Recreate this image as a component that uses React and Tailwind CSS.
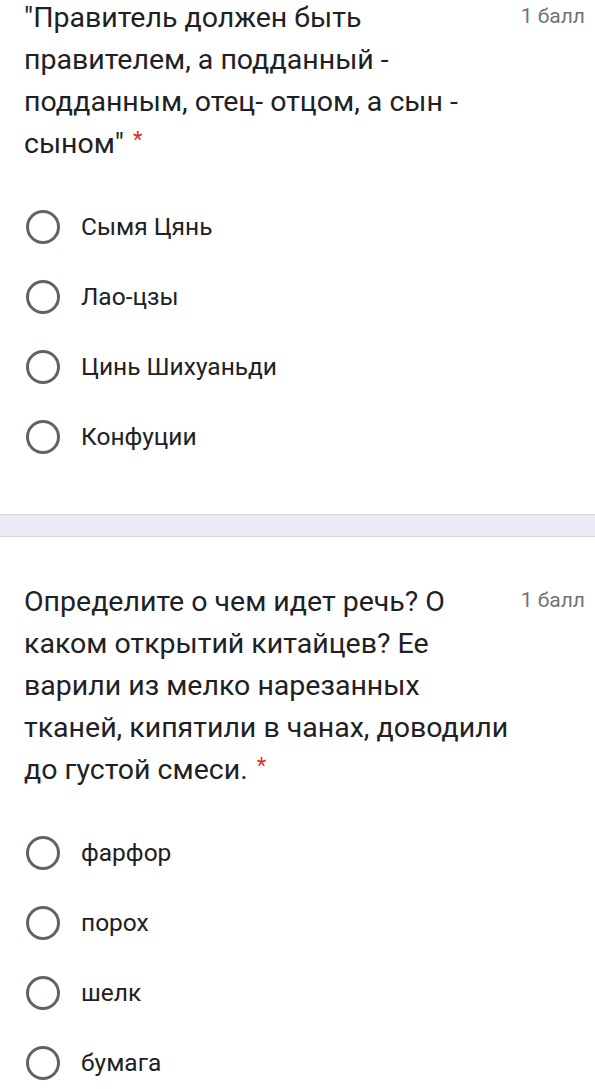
import React from "react";

function Option({ label }) {
  return (
    <div className="flex h-[70px] items-center">
      <div className="ml-[26px] h-[34px] w-[34px] shrink-0 rounded-full border-[3px] border-[#5f6368]" />
      <span className="ml-[21px] text-[24.5px] text-[#202124]">{label}</span>
    </div>
  );
}

function Question({ lines, options }) {
  return (
    <div className="bg-white">
      <div className="flex justify-between pl-6 pr-[10px]">
        <div className="w-[488px] text-[28.5px] leading-[42px] text-[#202124]">
          {lines.map((l, i) => (
            <div key={i} className="whitespace-nowrap">
              {l}
              {i === lines.length - 1 && (
                <span className="ml-[9px] align-top text-[22px] leading-[34px] text-[#d93025]">*</span>
              )}
            </div>
          ))}
        </div>
        <div className="pt-[1px] text-[21px] leading-[36px] text-[#70757a]">1 балл</div>
      </div>
      <div className="mt-[27px]">
        {options.map((o) => (
          <Option key={o} label={o} />
        ))}
      </div>
    </div>
  );
}

export default function App() {
  return (
    <div className="w-[595px] bg-white" style={{ fontFamily: "Roboto, 'Noto Sans', sans-serif" }}>
      <div className="-mt-[3px]">
        <Question
          lines={['"Правитель должен быть', "правителем, а подданный -", "подданным, отец- отцом, а сын -", 'сыном"']}
          options={["Сымя Цянь", "Лао-цзы", "Цинь Шихуаньди", "Конфуции"]}
        />
      </div>
      <div className="mt-[42px] h-[23px] border-y border-[#d6d4dc] bg-[#ece9f6]" />
      <div className="pt-[44px]">
        <Question
          lines={[
            "Определите о чем идет речь? О",
            "каком открытий китайцев? Ее",
            "варили из мелко нарезанных",
            "тканей, кипятили в чанах, доводили",
            "до густой смеси.",
          ]}
          options={["фарфор", "порох", "шелк", "бумага"]}
        />
      </div>
    </div>
  );
}
